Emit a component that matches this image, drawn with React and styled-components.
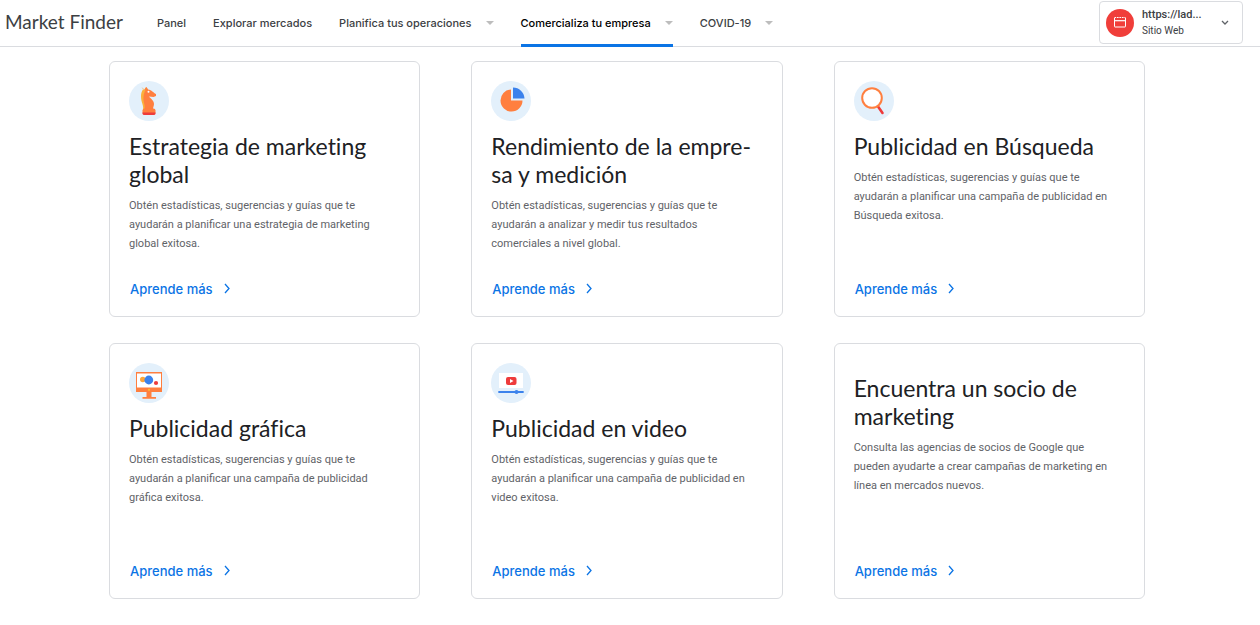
import React from "react";
import styled, { createGlobalStyle } from "styled-components";

const display = `Lato, "Open Sans", sans-serif`;
const nav = `Inter, Roboto, sans-serif`;

const GlobalStyle = createGlobalStyle`
  *, *::before, *::after { box-sizing: border-box; }
  body { margin: 0; background: #fff; color: #202124; font-family: Roboto, sans-serif; }
  h2, p { margin: 0; }
`;

const Header = styled.header`
  display: flex;
  align-items: center;
  height: 47px;
  padding: 0 17px 0 5px;
  border-bottom: 1px solid #dadce0;
`;

const Brand = styled.a`
  width: 152px;
  flex: none;
  padding-bottom: 2px;
  font-family: ${display};
  font-size: 19px;
  line-height: 28px;
  color: #3c4043;
  text-decoration: none;
  white-space: nowrap;
`;

const Nav = styled.nav`
  display: flex;
  align-self: stretch;
  gap: 27px;
  flex: 1;
`;

const NavLink = styled.a`
  display: flex;
  align-items: center;
  gap: 14px;
  height: 47px;
  padding-bottom: 2px;
  font-family: ${nav};
  font-size: 11px;
  font-weight: 500;
  line-height: 16px;
  color: ${(p) => (p.$active ? "#000" : "#3c4043")};
  box-shadow: ${(p) => (p.$active ? "inset 0 -3px #0b74e5" : "none")};
  text-decoration: none;
  white-space: nowrap;
`;

const Caret = styled.span`
  border: 4px solid transparent;
  border-top-color: #bdbdbd;
  border-bottom: 0;
`;

const SiteButton = styled.button`
  display: flex;
  align-items: center;
  gap: 8px;
  width: 144px;
  height: 43px;
  margin-bottom: 1px;
  padding: 0 13px 0 6px;
  background: #fff;
  border: 1px solid #dadce0;
  border-radius: 4px;
  font-family: Roboto, sans-serif;
  color: #3c4043;
  text-align: left;
`;

const SiteText = styled.span`
  display: flex;
  flex-direction: column;
  flex: 1;
  font-size: 10px;
  line-height: 16px;
  strong { font-size: 11px; font-weight: 500; }
`;

const Grid = styled.main`
  display: grid;
  grid-template-columns: repeat(3, minmax(0, 1fr));
  gap: 26px 51px;
  padding: 14px 115px 26px 109px;
`;

const Card = styled.article`
  display: flex;
  flex-direction: column;
  min-height: 256px;
  padding: 19px 24px 17px 19px;
  border: 1px solid #dadce0;
  border-radius: 6px;
  svg { flex: none; }
`;

const Title = styled.h2`
  margin: 11px 0 8px;
  font-family: ${display};
  font-size: 23px;
  font-weight: 400;
  line-height: 28px;
  font-variant-ligatures: none;
  hyphens: manual;
`;

const Text = styled.p`
  font-size: 11px;
  line-height: 19px;
  color: #5f6368;
`;

const More = styled.a`
  display: flex;
  align-items: center;
  align-self: flex-start;
  gap: 10px;
  margin-top: auto;
  padding-left: 1px;
  font-family: ${nav};
  font-size: 13px;
  font-weight: 500;
  line-height: 20px;
  color: #0b74e5;
  text-decoration: none;
`;

const Disc = ({ children }) => (
  <svg width="40" height="40" viewBox="0 0 40 40" aria-hidden="true">
    <circle cx="20" cy="20" r="20" fill="#e3f0fb" />
    {children}
  </svg>
);

const Knight = () => (
  <Disc>
    <path d="M12.500 6l2.500 3 2-3 2 2.500-3 20h-2c1-4-2-7-2-13 0-3 .5-5 2-7z" fill="#fbb03b" />
    <path d="M12.500 6l3 2.500L17.500 6l1.500 2.500c4 .5 5 3 8 4.500v2l-2.500 1-4.500-.5c2 2.500 5 4 5 7.500 0 2-1 3-1 5H15.500c1-4-1.500-7-1-12 .2-3 1-5 2-7z" fill="#ff7f3f" />
    <rect x="13.500" y="27.500" width="13" height="6" rx="2" fill="#ff7f3f" />
    <path d="M13.500 31.500h13v1q0 1.500-2 1.500h-9q-2 0-2-1.500z" fill="#ee3b3b" />
    <circle cx="19.500" cy="10.800" r="1" fill="#fff" />
  </Disc>
);

const Pie = () => (
  <Disc>
    <path d="M20 8.500V19.500h11.500A11 11 0 1 1 20 8.500z" fill="#ff7f3f" />
    <path d="M22 6.500A11.500 11.500 0 0 1 33.500 17.500H22z" fill="#3b82ec" />
  </Disc>
);

const Magnifier = () => (
  <Disc>
    <path d="M24 25.500l4.500 6.500" stroke="#ee3b3b" strokeWidth="2.600" strokeLinecap="round" />
    <circle cx="18" cy="17" r="9.800" fill="#fff" stroke="#ff7f3f" strokeWidth="2" />
  </Disc>
);

const Monitor = () => (
  <Disc>
    <path d="M17.500 28h5v6h-5zM13.500 34h13.500v1.800H13.500z" fill="#ff7f3f" />
    <rect x="7" y="9" width="26" height="20" fill="#ff7f3f" />
    <rect x="8" y="10.500" width="24" height="14" fill="#fff" />
    <circle cx="13.800" cy="16.500" r="2.800" fill="#fba63b" />
    <circle cx="19.800" cy="17" r="4.400" fill="#3b82ec" />
    <circle cx="27" cy="20" r="2.100" fill="#ee3b3b" />
    <circle cx="20" cy="26.800" r="1.100" fill="#fbc02d" />
  </Disc>
);

const Video = () => (
  <Disc>
    <rect x="8" y="10" width="24" height="15" fill="#fff" />
    <rect x="15" y="14" width="10.500" height="8" rx="2" fill="#ee3b3b" />
    <path d="M19 16l3.500 2-3.500 2z" fill="#fff" />
    <path d="M8 29h24" stroke="#3b82ec" strokeWidth="1.800" strokeLinecap="round" />
    <circle cx="25.500" cy="29" r="2" fill="#3b82ec" />
  </Disc>
);

const SiteIcon = () => (
  <svg width="28" height="28" viewBox="0 0 28 28" aria-hidden="true">
    <circle cx="14" cy="14" r="14" fill="#f03e3a" />
    <rect x="8.500" y="8.500" width="11" height="9.500" rx="0.500" fill="none" stroke="#fff" />
    <path d="M8.500 11.700h11" stroke="#fff" strokeWidth="1.200" />
    <path d="M10 8.500h1M12.500 8.500h1M15 8.500h1M17.500 8.500h1" stroke="#f03e3a" strokeWidth="0.800" />
  </svg>
);

const Chevron = ({ down }) =>
  down ? (
    <svg width="8" height="6" viewBox="0 0 8 6" aria-hidden="true">
      <path d="M1 1l3 3 3-3" fill="none" stroke="#5f6368" strokeWidth="1.300" />
    </svg>
  ) : (
    <svg width="8" height="12" viewBox="0 0 8 12" aria-hidden="true">
      <path d="M2 1l4 4.500-4 4.500" fill="none" stroke="#0b74e5" strokeWidth="1.300" />
    </svg>
  );

const links = [
  { label: "Panel" },
  { label: "Explorar mercados" },
  { label: "Planifica tus operaciones", menu: true },
  { label: "Comercializa tu empresa", menu: true, active: true },
  { label: "COVID-19", menu: true },
];

const intro = "Obtén estadísticas, sugerencias y guías que te ayudarán a ";

const cards = [
  { icon: Knight, title: "Estrategia de marketing global", text: intro + "planificar una estrategia de marketing global exitosa." },
  { icon: Pie, title: "Rendimiento de la empre\u00adsa y medición", text: intro + "analizar y medir tus resultados comerciales a nivel global." },
  { icon: Magnifier, title: "Publicidad en Búsqueda", text: intro + "planificar una campaña de publicidad en Búsqueda exitosa." },
  { icon: Monitor, title: "Publicidad gráfica", text: intro + "planificar una campaña de publicidad gráfica exitosa." },
  { icon: Video, title: "Publicidad en video", text: intro + "planificar una campaña de publicidad en video exitosa." },
  { title: "Encuentra un socio de marketing", text: "Consulta las agencias de socios de Google que pueden ayudarte a crear campañas de marketing en línea en mercados nuevos." },
];

export default function App() {
  return (
    <>
      <GlobalStyle />
      <Header>
        <Brand href="#">Market Finder</Brand>
        <Nav>
          {links.map((l) => (
            <NavLink key={l.label} href="#" $active={l.active} aria-current={l.active ? "page" : undefined}>
              {l.label}
              {l.menu && <Caret />}
            </NavLink>
          ))}
        </Nav>
        <SiteButton type="button">
          <SiteIcon />
          <SiteText>
            <strong>https://lad...</strong>
            <span>Sitio Web</span>
          </SiteText>
          <Chevron down />
        </SiteButton>
      </Header>
      <Grid>
        {cards.map(({ icon: Icon, title, text }) => (
          <Card key={title}>
            {Icon && <Icon />}
            <Title>{title}</Title>
            <Text>{text}</Text>
            <More href="#">
              Aprende más
              <Chevron />
            </More>
          </Card>
        ))}
      </Grid>
    </>
  );
}
